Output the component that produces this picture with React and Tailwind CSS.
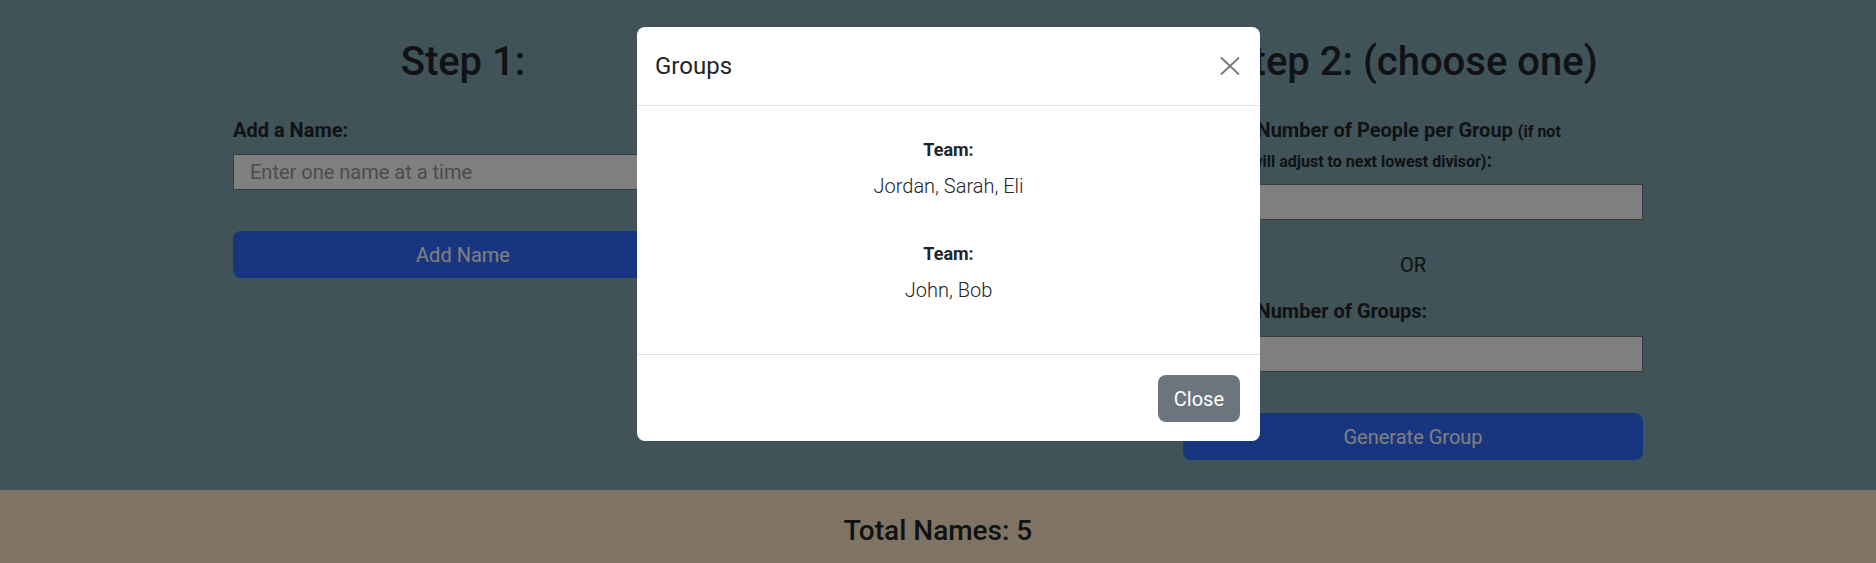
import React from 'react';

const teams = [
  ['Jordan', 'Sarah', 'Eli'],
  ['John', 'Bob'],
];

const inputCls =
  'block w-full h-[36px] px-[16px] text-[20px] bg-white border border-[#767676] text-[#212529] placeholder:text-[#999] outline-none';
const primaryBtn =
  'block w-full h-[47px] rounded-lg bg-[#306cfe] text-white text-[20px] leading-[30px]';

const App = () => {
  return (
    <div className="relative h-[563px] overflow-hidden flex flex-col font-[Roboto,sans-serif] text-[#212529]">
      {/* Page */}
      <div className="bg-[#80a6b0] pb-[30px]">
        <div className="flex -mx-3">
          {/* Step 1 */}
          <div className="w-1/2 px-3">
            <h1 className="mt-[38px] text-center text-[40px] leading-[48px] font-medium">Step 1:</h1>
            <div className="w-[460px] mx-auto mt-[29px]">
              <label className="block text-[20px] leading-[30px] font-bold">Add a Name:</label>
              <input className={`${inputCls} mt-[9px]`} placeholder="Enter one name at a time" />
              <button className={`${primaryBtn} mt-[41px]`}>Add Name</button>
            </div>
          </div>

          {/* Step 2 */}
          <div className="w-1/2 px-3">
            <h1 className="mt-[38px] text-center text-[40px] leading-[48px] font-medium">Step 2: (choose one)</h1>
            <div className="w-[460px] mx-auto mt-[29px]">
              <label className="block text-[20px] leading-[30px] font-bold">
                Desired Number of People per Group{' '}
                <span className="text-[16px] leading-[16px]">
                  (if not
                  <br />
                  divisible, will adjust to next lowest divisor)
                </span>
                :
              </label>
              <input className={`${inputCls} mt-[9px]`} />
              <p className="mt-[30px] text-center text-[20px] leading-[30px]">OR</p>
              <label className="block mt-[16px] text-[20px] leading-[30px] font-bold">Desired Number of Groups:</label>
              <input className={`${inputCls} mt-[10px]`} />
              <button className={`${primaryBtn} mt-[41px]`}>Generate Group</button>
            </div>
          </div>
        </div>
      </div>

      {/* Footer */}
      <div className="flex-1 bg-[#fee8c6] pt-[24px]">
        <h3 className="text-center text-[28px] leading-[34px] font-medium">Total Names: 5</h3>
      </div>

      {/* Modal backdrop */}
      <div className="absolute inset-0 bg-black/50" />

      {/* Modal */}
      <div className="absolute left-[637px] top-[27px] w-[623px] bg-white rounded-lg">
        <div className="h-[79px] flex items-center justify-between pl-[18px] pr-[20px] border-b border-[#dee2e6]">
          <h5 className="text-[24px] leading-[36px] font-normal">Groups</h5>
          <button className="w-[20px] h-[20px] flex items-center justify-center">
            <svg width="20" height="18" viewBox="0 0 20 18" fill="none">
              <path d="M1 0.5L19 17.5M19 0.5L1 17.5" stroke="#000" strokeOpacity="0.55" strokeWidth="1.8" />
            </svg>
          </button>
        </div>

        <div className="pt-[30px] pb-[49px] text-center">
          {teams.map((team, i) => (
            <div key={i} className={i < teams.length - 1 ? 'mb-[39px]' : ''}>
              <h6 className="text-[18px] leading-[27px] font-bold">Team:</h6>
              <p className="mt-[8px] text-[20px] leading-[30px] font-light">{team.join(', ')}</p>
            </div>
          ))}
        </div>

        <div className="flex justify-end border-t border-[#dee2e6] pt-[20px] pb-[19px] pr-[20px]">
          <button className="h-[47px] px-[16px] rounded-lg bg-[#6c757d] text-white text-[20px] leading-[30px]">
            Close
          </button>
        </div>
      </div>
    </div>
  );
};

export default App;
